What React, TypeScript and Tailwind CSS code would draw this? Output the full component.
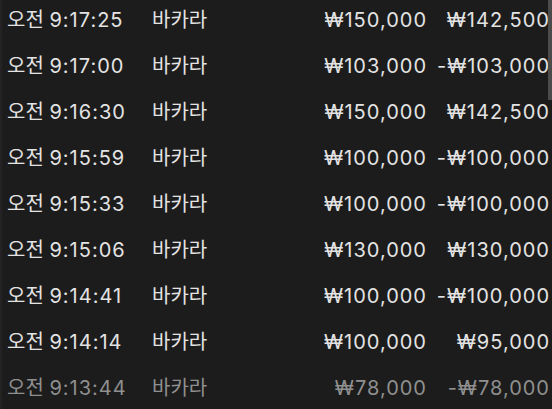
const rows = [
  { time: "9:17:25", game: "바카라", bet: "₩150,000", result: "₩142,500" },
  { time: "9:17:00", game: "바카라", bet: "₩103,000", result: "-₩103,000" },
  { time: "9:16:30", game: "바카라", bet: "₩150,000", result: "₩142,500" },
  { time: "9:15:59", game: "바카라", bet: "₩100,000", result: "-₩100,000" },
  { time: "9:15:33", game: "바카라", bet: "₩100,000", result: "-₩100,000" },
  { time: "9:15:06", game: "바카라", bet: "₩130,000", result: "₩130,000" },
  { time: "9:14:41", game: "바카라", bet: "₩100,000", result: "-₩100,000" },
  { time: "9:14:14", game: "바카라", bet: "₩100,000", result: "₩95,000" },
  { time: "9:13:44", game: "바카라", bet: "₩78,000", result: "-₩78,000" },
];

export default function App() {
  return (
    <div
      className="relative w-[552px] h-[409px] overflow-hidden bg-[#1c1c1c] text-[#e3e3e3]"
      style={{ fontFamily: 'Inter, "Noto Sans CJK KR", sans-serif' }}
    >
      {/* faint left edge */}
      <div className="absolute left-0 top-0 bottom-0 w-[2px] bg-[#232323]" />
      <ul className="-mt-[3px]">
        {rows.map((r, i) => (
          <li
            key={i}
            className={`flex items-center h-[46px] text-[20px] leading-none ${
              i === rows.length - 1 ? "text-[#8f8f8f]" : ""
            }`}
          >
            <span className="w-[152px] pl-[7px] shrink-0">
              오전 <span className="tracking-[1px]">{r.time}</span>
            </span>
            <span className="w-[100px] shrink-0">{r.game}</span>
            <span className="w-[175px] text-right shrink-0 tracking-[1px]">{r.bet}</span>
            <span className="w-[123px] text-right shrink-0 tracking-[1px]">{r.result}</span>
          </li>
        ))}
      </ul>
      {/* scrollbar thumb */}
      <div className="absolute right-0 top-0 w-[4px] h-[100px] bg-[#4b4b4b]" />
    </div>
  );
}
